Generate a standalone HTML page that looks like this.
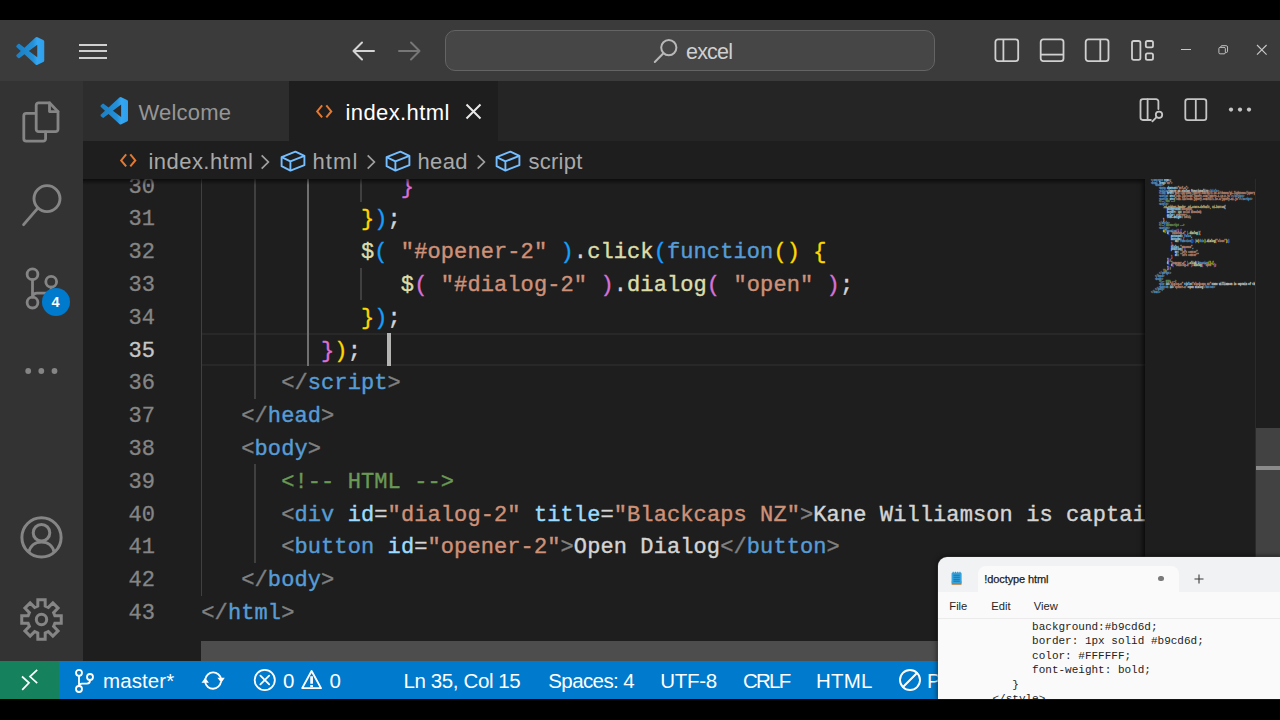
<!DOCTYPE html>
<html lang="en">
<head>
<meta charset="utf-8">
<title>index.html - excel - Visual Studio Code</title>
<style>
html,body{margin:0;padding:0;}
body{width:1280px;height:720px;overflow:hidden;position:relative;background:#000;font-family:"Liberation Sans",sans-serif;color:#ccc;}
.abs{position:absolute;}
#titlebar{left:0;top:20px;width:1280px;height:60.5px;background:#3b3b3b;}
#activity{left:0;top:80.5px;width:83px;height:580.5px;background:#333333;}
#tabs{left:83px;top:80.5px;width:1197px;height:60.5px;background:#252526;}
#crumbs{left:83px;top:141px;width:1197px;height:38px;background:#1e1e1e;}
#editor{left:83px;top:179px;width:1197px;height:482px;background:#1e1e1e;overflow:hidden;}
#status{left:0;top:661px;width:1280px;height:38.4px;background:#007acc;color:#fff;}
#status .ui{font-size:20.5px;}
svg{display:block;overflow:visible;}
.ui{font-size:21.5px;white-space:nowrap;line-height:1;}
/* code */
.ln{position:absolute;left:0;width:71.5px;text-align:right;color:#858585;-webkit-text-stroke:0.3px;font:22px/32.8px "Liberation Mono",monospace;height:32.8px;white-space:pre;}
.cl{position:absolute;left:118px;color:#d4d4d4;letter-spacing:.1px;-webkit-text-stroke:0.4px;font:22px/32.8px "Liberation Mono",monospace;height:32.8px;white-space:pre;}
.g{color:#808080}.t{color:#569cd6}.a{color:#9cdcfe}.s{color:#ce9178}.c{color:#6a9955}.f{color:#dcdcaa}
.n{color:#b5cea8}.d{color:#d7ba7d}
.b1{color:#ffd700}.b2{color:#da70d6}.b3{color:#179fff}
.guide{position:absolute;width:1.7px;background:#404040;}
.guide.act{background:#707070;}
</style>
</head>
<body>

<!-- ===== TITLE BAR ===== -->
<div id="titlebar" class="abs">
  <svg class="abs" style="left:16px;top:16.5px" width="28.5" height="28" viewBox="0 0 24 24"><defs><linearGradient id="vg" x1="0" y1="0" x2="1" y2="0"><stop offset="0" stop-color="#1b7fc4"/><stop offset=".6" stop-color="#2490d8"/><stop offset=".75" stop-color="#35a6f2"/><stop offset="1" stop-color="#2e9fea"/></linearGradient></defs><path fill="url(#vg)" d="M23.15 2.587L18.21.21a1.494 1.494 0 0 0-1.705.29l-9.46 8.63-4.12-3.128a.999.999 0 0 0-1.276.057L.327 7.261A1 1 0 0 0 .326 8.74L3.899 12 .326 15.26a1 1 0 0 0 .001 1.479L1.65 17.94a.999.999 0 0 0 1.276.057l4.12-3.128 9.46 8.63a1.492 1.492 0 0 0 1.704.29l4.942-2.377A1.5 1.5 0 0 0 24 20.06V3.939a1.5 1.5 0 0 0-.85-1.352zm-5.146 14.861L10.826 12l7.178-5.448v10.896z"/></svg>
  <!-- hamburger -->
  <div class="abs" style="left:79px;top:23.5px;width:28px;height:2px;background:#d0d0d0"></div>
  <div class="abs" style="left:79px;top:30.2px;width:28px;height:2px;background:#d0d0d0"></div>
  <div class="abs" style="left:79px;top:37px;width:28px;height:2px;background:#d0d0d0"></div>
  <!-- nav arrows -->
  <svg class="abs" style="left:351px;top:19px" width="26" height="24" viewBox="0 0 26 24" fill="none" stroke="#d4d4d4" stroke-width="2" stroke-linecap="round" stroke-linejoin="round"><path d="M2.5 12H23M11 3.5L2.5 12l8.5 8.5"/></svg>
  <svg class="abs" style="left:396px;top:19px" width="26" height="24" viewBox="0 0 26 24" fill="none" stroke="#777" stroke-width="2" stroke-linecap="round" stroke-linejoin="round"><path d="M3 12H23.5M15 3.5L23.5 12 15 20.5"/></svg>
  <!-- command center -->
  <div class="abs" style="left:445px;top:10px;width:488px;height:38.5px;background:#464646;border:1px solid #646464;border-radius:10px;"></div>
  <svg class="abs" style="left:653px;top:17.5px" width="26" height="26" viewBox="0 0 26 26" fill="none" stroke="#b8b8b8" stroke-width="2" stroke-linecap="round"><circle cx="15.8" cy="9.6" r="7.6"/><path d="M10.4 15.2L1.8 24"/></svg>
  <div class="abs ui" style="left:686px;top:21.700px;color:#d0d0d0;letter-spacing:-0.8px;">excel</div>
  <!-- layout controls -->
  <svg class="abs" style="left:993px;top:17px" width="28" height="27" viewBox="0 0 28 27" fill="none" stroke="#d0d0d0" stroke-width="1.8"><rect x="2.4" y="2.3" width="22.8" height="21.8" rx="2.6"/><path d="M10.4 2.3V24"/></svg>
  <svg class="abs" style="left:1038px;top:17px" width="28" height="27" viewBox="0 0 28 27" fill="none" stroke="#d0d0d0" stroke-width="1.8"><rect x="2.7" y="2.3" width="22.8" height="21.8" rx="2.6"/><path d="M2.7 17.6H25.5"/></svg>
  <svg class="abs" style="left:1083px;top:17px" width="28" height="27" viewBox="0 0 28 27" fill="none" stroke="#d0d0d0" stroke-width="1.8"><rect x="2.7" y="2.3" width="22.8" height="21.8" rx="2.6"/><path d="M17.3 2.3V24"/></svg>
  <svg class="abs" style="left:1129px;top:17px" width="28" height="27" viewBox="0 0 28 27" fill="none" stroke="#d0d0d0" stroke-width="1.8"><rect x="3" y="4" width="8.4" height="18.8" rx="1.8"/><rect x="16.8" y="4" width="7.2" height="6.4" rx="1.6"/><rect x="16.8" y="16.4" width="7.2" height="6.4" rx="1.6"/></svg>
  <!-- window controls -->
  <div class="abs" style="left:1181px;top:28.6px;width:9.5px;height:1.2px;background:#c8c8c8"></div>
  <svg class="abs" style="left:1217.500px;top:25px" width="10.600" height="10.200" viewBox="0 0 12 12" fill="none" stroke="#c8c8c8" stroke-width="1.1"><rect x="0.8" y="2.8" width="7.6" height="7.6" rx="1.4"/><path d="M3 2.6V2.2A1.4 1.4 0 0 1 4.4.8H9.4A1.6 1.6 0 0 1 11 2.4V7.4A1.4 1.4 0 0 1 9.6 8.8H8.6"/></svg>
  <svg class="abs" style="left:1256px;top:24px" width="12" height="12" viewBox="0 0 12 12" fill="none" stroke="#c8c8c8" stroke-width="1.1"><path d="M1 1l9.6 9.6M10.6 1L1 10.6"/></svg>
</div>

<!-- ===== ACTIVITY BAR ===== -->
<div id="activity" class="abs">
  <!-- explorer -->
  <svg class="abs" style="left:20px;top:19px" width="42" height="44" viewBox="0 0 42 44" fill="none" stroke="#858585" stroke-width="2.800" stroke-linejoin="round" stroke-linecap="round"><path d="M29.5 2.8H18.6a2.4 2.4 0 0 0-2.4 2.4v24a2.4 2.4 0 0 0 2.4 2.4h17a2.4 2.4 0 0 0 2.4-2.4V11.6z"/><path d="M29.5 2.8v8.8H38"/><path d="M15.6 13.4H6.2a2.4 2.4 0 0 0-2.4 2.4v23a2.4 2.4 0 0 0 2.4 2.4h17a2.4 2.4 0 0 0 2.4-2.4V32"/></svg>
  <!-- search -->
  <svg class="abs" style="left:20px;top:101px" width="44" height="46" viewBox="0 0 44 46" fill="none" stroke="#858585" stroke-width="2.900" stroke-linecap="round"><circle cx="27" cy="16.6" r="13"/><path d="M17.6 26.4L3.6 42.6"/></svg>
  <!-- scm -->
  <svg class="abs" style="left:22px;top:184px" width="50" height="50" viewBox="0 0 50 50" fill="none" stroke="#858585" stroke-width="2.800" stroke-linecap="round"><circle cx="10.5" cy="9.2" r="5.4"/><circle cx="10.5" cy="37.6" r="5.4"/><circle cx="29.2" cy="16.8" r="5.4"/><path d="M10.5 14.6V32.2M29.2 22.2v1.2a4.8 4.8 0 0 1-4.8 4.8H15.3a4.8 4.8 0 0 0-4.8 4"/></svg>
  <div class="abs" style="left:41.5px;top:207.5px;width:28px;height:28px;border-radius:14px;background:#007acc;color:#fff;font-weight:bold;font-size:14.5px;line-height:28px;text-align:center;">4</div>
  <!-- more -->
  <svg class="abs" style="left:24px;top:286px" width="36" height="8" viewBox="0 0 36 8" fill="#858585"><circle cx="4.2" cy="4" r="2.9"/><circle cx="17.3" cy="4" r="2.9"/><circle cx="30.5" cy="4" r="2.9"/></svg>
  <!-- account -->
  <svg class="abs" style="left:20px;top:435px" width="43" height="43" viewBox="0 0 43 43" fill="none" stroke="#858585" stroke-width="3"><circle cx="21.500" cy="21.400" r="19.600"/><circle cx="21.500" cy="16.800" r="8.300"/><path d="M8.800 36.300c1.400-6.600 6.400-10.400 12.700-10.400s11.300 3.800 12.700 10.400"/></svg>
  <!-- manage -->
  <svg class="abs" style="left:20px;top:517px" width="43" height="43" viewBox="0 0 43 43" fill="none" stroke="#858585" stroke-width="3" stroke-linejoin="miter"><path d="M17.79 8.11 L17.84 1.74 L25.16 1.74 L25.21 8.11 L28.34 9.40 L32.88 4.94 L38.06 10.12 L33.60 14.66 L34.89 17.79 L41.26 17.84 L41.26 25.16 L34.89 25.21 L33.60 28.34 L38.06 32.88 L32.88 38.06 L28.34 33.60 L25.21 34.89 L25.16 41.26 L17.84 41.26 L17.79 34.89 L14.66 33.60 L10.12 38.06 L4.94 32.88 L9.40 28.34 L8.11 25.21 L1.74 25.16 L1.74 17.84 L8.11 17.79 L9.40 14.66 L4.94 10.12 L10.12 4.94 L14.66 9.40Z"/><circle cx="21.500" cy="21.500" r="5.200"/></svg>
</div>

<!-- ===== TABS ===== -->
<div id="tabs" class="abs">
  <div class="abs" style="left:0;top:0;width:206px;height:60.5px;background:#2d2d2d;"></div>
  <svg class="abs" style="left:16.5px;top:16px" width="28.5" height="27.5" viewBox="0 0 24 24"><path fill="url(#vg)" d="M23.15 2.587L18.21.21a1.494 1.494 0 0 0-1.705.29l-9.46 8.63-4.12-3.128a.999.999 0 0 0-1.276.057L.327 7.261A1 1 0 0 0 .326 8.74L3.899 12 .326 15.26a1 1 0 0 0 .001 1.479L1.65 17.94a.999.999 0 0 0 1.276.057l4.12-3.128 9.46 8.63a1.492 1.492 0 0 0 1.704.29l4.942-2.377A1.5 1.5 0 0 0 24 20.06V3.939a1.5 1.5 0 0 0-.85-1.352zm-5.146 14.861L10.826 12l7.178-5.448v10.896z"/></svg>
  <div class="abs ui" style="left:55.5px;top:21.2px;color:#969696;font-size:22px;letter-spacing:.2px;">Welcome</div>
  <div class="abs" style="left:206px;top:0;width:208.5px;height:60.5px;background:#1e1e1e;"></div>
  <svg class="abs" style="left:232px;top:23px" width="19" height="15.400" viewBox="0 0 21 17" fill="none" stroke="#e37933" stroke-width="2.2" stroke-linecap="square" stroke-linejoin="miter"><path d="M7.2 2.4L2.4 8.2l4.8 5.8M13.2 2.4l4.8 5.8-4.8 5.8"/></svg>
  <div class="abs ui" style="left:262.5px;top:21.2px;color:#fff;font-size:22px;letter-spacing:.4px;">index.html</div>
  <svg class="abs" style="left:382px;top:22px" width="17" height="17" viewBox="0 0 17 17" fill="none" stroke="#e8e8e8" stroke-width="2"><path d="M1.5 1.5l14 14M15.5 1.5l-14 14"/></svg>
  <!-- editor actions -->
  <svg class="abs" style="left:1055px;top:16px" width="28" height="27" viewBox="0 0 28 27" fill="none" stroke="#c5c5c5" stroke-width="1.8" stroke-linecap="round"><path d="M20.4 12V4.6a2.4 2.4 0 0 0-2.4-2.4H4.9a2.4 2.4 0 0 0-2.4 2.4v16a2.4 2.4 0 0 0 2.4 2.4h8"/><path d="M9.6 2.2V23"/><circle cx="21" cy="17.800" r="3.200"/><path d="M18.600 20.200l-4.200 4.200"/></svg>
  <svg class="abs" style="left:1100px;top:16px" width="28" height="27" viewBox="0 0 28 27" fill="none" stroke="#c5c5c5" stroke-width="1.8"><rect x="2.3" y="2.2" width="21" height="21" rx="2.4"/><path d="M12.8 2.2V23.2"/></svg>
  <svg class="abs" style="left:1144px;top:25.300px" width="26" height="8" viewBox="0 0 26 8" fill="#c5c5c5"><circle cx="4" cy="3.6" r="2.1"/><circle cx="13" cy="3.6" r="2.1"/><circle cx="22" cy="3.6" r="2.1"/></svg>
</div>

<!-- ===== BREADCRUMBS ===== -->
<div id="crumbs" class="abs">
  <svg class="abs" style="left:35.500px;top:12px" width="19" height="15.400" viewBox="0 0 21 17" fill="none" stroke="#e37933" stroke-width="2.2" stroke-linecap="square"><path d="M7.2 2.4L2.4 8.2l4.8 5.8M13.2 2.4l4.8 5.8-4.8 5.8"/></svg>
  <div class="abs ui" style="left:65.5px;top:9.800px;color:#a9a9a9;font-size:22px;letter-spacing:.45px;">index.html</div>
  <svg class="abs" style="left:177.0px;top:12.500px" width="10" height="16" viewBox="0 0 12 19" fill="none" stroke="#a0a0a0" stroke-width="2.100"><path d="M2 1.6l8 7.9-8 7.9"/></svg>
  <svg class="abs" style="left:197px;top:8px" width="26" height="24" viewBox="0 0 26 24" fill="none" stroke="#75beff" stroke-width="1.9" stroke-linejoin="round"><path d="M1.6 8.2L15.4 2.6l9 4.2v9.4L10.4 21.6 1.6 17.2z"/><path d="M1.6 8.2l8.8 4.2 14-5.6M10.4 12.4v9.2"/></svg>
  <div class="abs ui" style="left:229.5px;top:9.800px;color:#a9a9a9;font-size:22px;letter-spacing:1.1px;">html</div>
  <svg class="abs" style="left:283.0px;top:12.500px" width="10" height="16" viewBox="0 0 12 19" fill="none" stroke="#a0a0a0" stroke-width="2.100"><path d="M2 1.6l8 7.9-8 7.9"/></svg>
  <svg class="abs" style="left:302px;top:8px" width="26" height="24" viewBox="0 0 26 24" fill="none" stroke="#75beff" stroke-width="1.9" stroke-linejoin="round"><path d="M1.6 8.2L15.4 2.6l9 4.2v9.4L10.4 21.6 1.6 17.2z"/><path d="M1.6 8.2l8.8 4.2 14-5.6M10.4 12.4v9.2"/></svg>
  <div class="abs ui" style="left:334.5px;top:9.800px;color:#a9a9a9;font-size:22px;letter-spacing:.35px;">head</div>
  <svg class="abs" style="left:392.5px;top:12.500px" width="10" height="16" viewBox="0 0 12 19" fill="none" stroke="#a0a0a0" stroke-width="2.100"><path d="M2 1.6l8 7.9-8 7.9"/></svg>
  <svg class="abs" style="left:412px;top:8px" width="26" height="24" viewBox="0 0 26 24" fill="none" stroke="#75beff" stroke-width="1.9" stroke-linejoin="round"><path d="M1.6 8.2L15.4 2.6l9 4.2v9.4L10.4 21.6 1.6 17.2z"/><path d="M1.6 8.2l8.8 4.2 14-5.6M10.4 12.4v9.2"/></svg>
  <div class="abs ui" style="left:445.5px;top:9.800px;color:#a9a9a9;font-size:22px;letter-spacing:.25px;">script</div>
</div>

<!-- ===== EDITOR ===== -->
<div id="editor" class="abs">
  <!-- current line highlight -->
  <div class="abs" style="left:118px;top:154.1px;width:944px;height:28.8px;border-top:2px solid #282828;border-bottom:2px solid #282828;"></div>
  <!-- indent guides -->
  <div class="guide" style="left:117.700px;top:0;height:416.5px;"></div>
  <div class="guide" style="left:170.900px;top:0;height:219.7px;"></div>
  <div class="guide" style="left:170.900px;top:285.3px;height:98.4px;"></div>
  <div class="guide act" style="left:224.100px;top:0;height:186.9px;"></div>
  <div class="guide" style="left:277.300px;top:0;height:22.9px;"></div>
  <div class="guide" style="left:277.300px;top:88.5px;height:32.8px;"></div>
  <!-- line numbers -->
  <div class="abs" style="left:0.5px;top:-7.4px;width:71.5px;">
    <div class="ln" style="top:0">30</div>
    <div class="ln" style="top:32.8px">31</div>
    <div class="ln" style="top:65.6px">32</div>
    <div class="ln" style="top:98.4px">33</div>
    <div class="ln" style="top:131.2px">34</div>
    <div class="ln" style="top:164px;color:#c6c6c6">35</div>
    <div class="ln" style="top:196.8px">36</div>
    <div class="ln" style="top:229.6px">37</div>
    <div class="ln" style="top:262.4px">38</div>
    <div class="ln" style="top:295.2px">39</div>
    <div class="ln" style="top:328px">40</div>
    <div class="ln" style="top:360.8px">41</div>
    <div class="ln" style="top:393.6px">42</div>
    <div class="ln" style="top:426.4px">43</div>
  </div>
  <!-- code -->
  <div class="abs" id="code" style="left:0.3px;top:-7.4px;width:1061.7px;height:500px;overflow:hidden;">
    <div class="cl" style="top:0">               <span class="b2">}</span></div>
    <div class="cl" style="top:32.8px">            <span class="b1">}</span><span class="b3">)</span>;</div>
    <div class="cl" style="top:65.6px">            <span class="f">$</span><span class="b3">(</span><span class="s"> "#opener-2" </span><span class="b3">)</span>.<span class="f">click</span><span class="b3">(</span><span class="t">function</span><span class="b1">()</span> <span class="b1">{</span></div>
    <div class="cl" style="top:98.4px">               <span class="f">$</span><span class="b2">(</span><span class="s"> "#dialog-2" </span><span class="b2">)</span>.<span class="f">dialog</span><span class="b2">(</span><span class="s"> "open" </span><span class="b2">)</span>;</div>
    <div class="cl" style="top:131.2px">            <span class="b1">}</span><span class="b3">)</span>;</div>
    <div class="cl" style="top:164px">         <span class="b2">}</span><span class="b1">)</span>; </div>
    <div class="cl" style="top:196.8px">      <span class="g">&lt;/</span><span class="t">script</span><span class="g">&gt;</span></div>
    <div class="cl" style="top:229.6px">   <span class="g">&lt;/</span><span class="t">head</span><span class="g">&gt;</span></div>
    <div class="cl" style="top:262.4px">   <span class="g">&lt;</span><span class="t">body</span><span class="g">&gt;</span></div>
    <div class="cl" style="top:295.2px">      <span class="c">&lt;!-- HTML --&gt;</span></div>
    <div class="cl" style="top:328px">      <span class="g">&lt;</span><span class="t">div</span> <span class="a">id</span>=<span class="s">"dialog-2"</span> <span class="a">title</span>=<span class="s">"Blackcaps NZ"</span><span class="g">&gt;</span>Kane Williamson is captain of the New Zealand team<span class="g">&lt;/</span><span class="t">div</span><span class="g">&gt;</span></div>
    <div class="cl" style="top:360.8px">      <span class="g">&lt;</span><span class="t">button</span> <span class="a">id</span>=<span class="s">"opener-2"</span><span class="g">&gt;</span>Open Dialog<span class="g">&lt;/</span><span class="t">button</span><span class="g">&gt;</span></div>
    <div class="cl" style="top:393.6px">   <span class="g">&lt;/</span><span class="t">body</span><span class="g">&gt;</span></div>
    <div class="cl" style="top:426.4px"><span class="g">&lt;/</span><span class="t">html</span><span class="g">&gt;</span></div>
  </div>
  <!-- cursor -->
  <div class="abs" style="left:304.300px;top:153.800px;width:3.700px;height:32.800px;background:#b4b5b3;"></div>
  <!-- top shadow under breadcrumbs -->
  <div class="abs" style="left:0;top:0;width:1173px;height:6px;background:linear-gradient(#000 0,rgba(0,0,0,0) 100%);opacity:.6;"></div>
  <!-- minimap -->
  <div class="abs" id="minimap" style="left:1062px;top:0;width:111px;height:482px;background:#1e1e1e;box-shadow:-4px 0 5px -2px rgba(0,0,0,.75);overflow:hidden;">
    <div class="abs" style="left:5.800px;top:-0.300px;width:900px;transform-origin:0 0;transform:scale(0.1389,0.16667);font:bold 16px/16px 'Liberation Mono',monospace;-webkit-text-stroke:2px;color:#d4d4d4;white-space:pre;opacity:.82;"><span class="g">&lt;!</span><span class="t">doctype</span> <span class="a">html</span><span class="g">&gt;</span>
<span class="g">&lt;</span><span class="t">html</span> <span class="a">lang</span>=<span class="s">"en"</span><span class="g">&gt;</span>
   <span class="g">&lt;</span><span class="t">head</span><span class="g">&gt;</span>
      <span class="g">&lt;</span><span class="t">meta</span> <span class="a">charset</span>=<span class="s">"utf-8"</span><span class="g">&gt;</span>
      <span class="g">&lt;</span><span class="t">title</span><span class="g">&gt;</span>jQuery UI Dialog functionality<span class="g">&lt;/</span><span class="t">title</span><span class="g">&gt;</span>
      <span class="g">&lt;</span><span class="t">link</span> <span class="a">href</span>=<span class="s">"cdn.lib/code.jquery.com/ui/1.10.4/themes/ui-lightness/jquery-ui.css"</span> <span class="a">rel</span>=<span class="s">"stylesheet"</span><span class="g">&gt;</span>
      <span class="g">&lt;</span><span class="t">script</span> <span class="a">src</span>=<span class="s">"cdn.lib/code.jquery.com/jquery-1.10.2.js"</span><span class="g">&gt;&lt;/</span><span class="t">script</span><span class="g">&gt;</span>
      <span class="g">&lt;</span><span class="t">script</span> <span class="a">src</span>=<span class="s">"cdn.lib/code.jquery.com/ui/1.10.4/jquery-ui.js"</span><span class="g">&gt;&lt;/</span><span class="t">script</span><span class="g">&gt;</span>
      <span class="c">&lt;!-- CSS --&gt;</span>
      <span class="g">&lt;</span><span class="t">style</span><span class="g">&gt;</span>
         <span class="d">.ui-widget-header,.ui-state-default, ui-button</span>{
            <span class="a">background</span>:<span class="s">#b9cd6d</span>;
            <span class="a">border</span>: <span class="n">1px</span> <span class="s">solid</span> <span class="s">#b9cd6d</span>;
            <span class="a">color</span>: <span class="s">#FFFFFF</span>;
            <span class="a">font-weight</span>: <span class="s">bold</span>;
         }
      <span class="g">&lt;/</span><span class="t">style</span><span class="g">&gt;</span>
      <span class="c">&lt;!-- Javascript --&gt;</span>
      <span class="g">&lt;</span><span class="t">script</span><span class="g">&gt;</span>
         <span class="f">$</span><span class="b1">(</span><span class="t">function</span><span class="b2">()</span> <span class="b2">{</span>
            <span class="f">$</span><span class="b3">(</span><span class="s"> "#dialog-2" </span><span class="b3">)</span>.<span class="f">dialog</span><span class="b3">(</span><span class="b1">{</span>
               <span class="a">autoOpen</span>: <span class="t">false</span>, 
               <span class="a">buttons</span>: <span class="b2">{</span>
                  <span class="f">OK</span>: <span class="t">function</span><span class="b3">()</span> <span class="b3">{</span><span class="f">$</span><span class="b1">(</span><span class="t">this</span><span class="b1">)</span>.<span class="f">dialog</span><span class="b1">(</span><span class="s">"close"</span><span class="b1">)</span>;<span class="b3">}</span>
               <span class="b2">}</span>,
               <span class="a">title</span>: <span class="s">"Success"</span>,
               <span class="a">position</span>: <span class="b2">{</span>
                  <span class="a">my</span>: <span class="s">"left center"</span>,
                  <span class="a">at</span>: <span class="s">"left center"</span>
               <span class="b2">}</span>
            <span class="b1">}</span><span class="b3">)</span>;
            <span class="f">$</span><span class="b3">(</span><span class="s"> "#opener-2" </span><span class="b3">)</span>.<span class="f">click</span><span class="b3">(</span><span class="t">function</span><span class="b1">()</span> <span class="b1">{</span>
               <span class="f">$</span><span class="b2">(</span><span class="s"> "#dialog-2" </span><span class="b2">)</span>.<span class="f">dialog</span><span class="b2">(</span><span class="s"> "open" </span><span class="b2">)</span>;
            <span class="b1">}</span><span class="b3">)</span>;
         <span class="b2">}</span><span class="b1">)</span>; 
      <span class="g">&lt;/</span><span class="t">script</span><span class="g">&gt;</span>
   <span class="g">&lt;/</span><span class="t">head</span><span class="g">&gt;</span>
   <span class="g">&lt;</span><span class="t">body</span><span class="g">&gt;</span>
      <span class="c">&lt;!-- HTML --&gt;</span>
      <span class="g">&lt;</span><span class="t">div</span> <span class="a">id</span>=<span class="s">"dialog-2"</span> <span class="a">title</span>=<span class="s">"Blackcaps NZ"</span><span class="g">&gt;</span>Kane Williamson is captain of the New Zealand team<span class="g">&lt;/</span><span class="t">div</span><span class="g">&gt;</span>
      <span class="g">&lt;</span><span class="t">button</span> <span class="a">id</span>=<span class="s">"opener-2"</span><span class="g">&gt;</span>Open Dialog<span class="g">&lt;/</span><span class="t">button</span><span class="g">&gt;</span>
   <span class="g">&lt;/</span><span class="t">body</span><span class="g">&gt;</span>
<span class="g">&lt;/</span><span class="t">html</span><span class="g">&gt;</span></div>
  </div>
  <!-- vertical scrollbar -->
  <div class="abs" style="left:1172px;top:0;width:1px;height:481px;background:#2b2b2b;"></div>
  <div class="abs" style="left:1173px;top:248.5px;width:24px;height:232.5px;background:#424242;"></div>
  <div class="abs" style="left:1173px;top:287.2px;width:24px;height:3.400px;background:#8b8b8b;"></div>
  <!-- horizontal scrollbar -->
  <div class="abs" style="left:118px;top:462px;width:760px;height:20px;background:#4d4d4d;"></div>
</div>

<!-- ===== STATUS BAR ===== -->
<div id="status" class="abs">
  <div class="abs" style="left:0;top:0;width:58.5px;height:38.4px;background:#16825d;"></div>
  <svg class="abs" style="left:20px;top:8px" width="19" height="22" viewBox="0 0 19 22" fill="none" stroke="#fff" stroke-width="1.7" stroke-linecap="butt"><path d="M2 7.500L9 13.800 2.200 20.800M17.200 .8L10 7.600l7.200 6.600"/></svg>
  <svg class="abs" style="left:73px;top:7px" width="23" height="26" viewBox="0 0 23 26" fill="none" stroke="#fff" stroke-width="1.8" stroke-linecap="round"><circle cx="6" cy="4.800" r="3"/><circle cx="6" cy="21" r="3"/><circle cx="17" cy="9" r="3"/><path d="M6 7.800V18M17 12v.6a3 3 0 0 1-3 3H9a3 3 0 0 0-3 2.400"/></svg>
  <div class="abs ui" style="left:103px;top:10.400px;letter-spacing:0.1px;">master*</div>
  <svg class="abs" style="left:200px;top:6.500px" width="26" height="26" viewBox="0 0 26 26" fill="none" stroke="#fff" stroke-width="1.8"><path d="M5.300 11.400A8 8 0 0 1 21.100 11M20.900 13.800A8 8 0 0 1 5.100 14.200"/><path d="M17.400 9.800h7.400l-3.500 4.900zM1.500 14.700h7.400L5.200 9.800z" fill="#fff" stroke="none"/></svg>
  <svg class="abs" style="left:253px;top:7px" width="24" height="24" viewBox="0 0 24 24" fill="none" stroke="#fff" stroke-width="1.8" stroke-linecap="round"><circle cx="11.750" cy="12" r="10.100"/><path d="M7.400 7.600l8.800 8.800M16.200 7.600l-8.800 8.800"/></svg>
  <div class="abs ui" style="left:283px;top:10.400px;">0</div>
  <svg class="abs" style="left:300px;top:7px" width="25" height="24" viewBox="0 0 25 24" fill="none" stroke="#fff" stroke-width="1.9" stroke-linejoin="round" stroke-linecap="butt"><path d="M11.600 3L21 20.100H2.200z"/><path d="M11.600 8.200v7.600M11.600 16.900v2.200" stroke-width="2.700"/></svg>
  <div class="abs ui" style="left:329.500px;top:10.400px;">0</div>
  <div class="abs ui" style="left:403.5px;top:10.400px;letter-spacing:-0.39px;">Ln 35, Col 15</div>
  <div class="abs ui" style="left:548.3px;top:10.400px;letter-spacing:-0.6px;">Spaces: 4</div>
  <div class="abs ui" style="left:660.3px;top:10.400px;letter-spacing:-0.3px;">UTF-8</div>
  <div class="abs ui" style="left:743px;top:10.400px;letter-spacing:-1.75px;">CRLF</div>
  <div class="abs ui" style="left:816px;top:10.400px;letter-spacing:0.2px;">HTML</div>
  <svg class="abs" style="left:897.5px;top:7.200px" width="24" height="24" viewBox="0 0 24 24" fill="none" stroke="#fff" stroke-width="1.900" stroke-linecap="round"><circle cx="12" cy="12" r="10"/><path d="M19 5L5 19"/></svg>
  <div class="abs ui" style="left:927px;top:10.400px;letter-spacing:0px;">Prettier</div>
</div>

<!-- ===== NOTEPAD ===== -->
<div id="notepad" class="abs" style="left:937.5px;top:557.4px;width:343px;height:142px;background:#f1f2f4;border-top-left-radius:9px;overflow:hidden;box-shadow:0 0 0 0.6px rgba(80,80,80,.5),0 0 5px 1px rgba(0,0,0,.55);">
  <!-- active tab -->
  <div class="abs" style="left:40.500px;top:8.500px;width:201px;height:30px;background:#fafafa;border-radius:8px 8px 0 0;"></div>
  <!-- body -->
  <div class="abs" style="left:0;top:34.500px;width:343px;height:110px;background:#fafafa;"></div>
  <div class="abs" style="left:0;top:60.500px;width:343px;height:1px;background:#ebebeb;"></div>
  <!-- app icon -->
  <svg class="abs" style="left:13.800px;top:13.500px" width="11.200" height="14.600" viewBox="0 0 12 15"><rect x="0.600" y="10.500" width="10.800" height="4" rx="1" fill="#b5793c"/><rect x="0.600" y="1.200" width="10.800" height="11.400" rx="1.400" fill="#35a3dd"/><path d="M2.600 4.200h6.800M2.600 6.400h6.800M2.600 8.600h6.800M2.600 10.600h6.800" stroke="#1c6fa3" stroke-width="1"/><path d="M2.400 0.500v1.600M4.800 0.500v1.600M7.200 0.500v1.600M9.600 0.500v1.600" stroke="#2a7fb5" stroke-width="0.900"/></svg>
  <div class="abs" style="left:46.800px;top:15.400px;font-size:11px;line-height:13px;color:#1b1b1b;white-space:nowrap;letter-spacing:-0.1px;-webkit-text-stroke:0.25px;">!doctype html</div>
  <div class="abs" style="left:220.800px;top:18.700px;width:5.400px;height:5.400px;border-radius:3px;background:#7a7a7a;"></div>
  <svg class="abs" style="left:256.500px;top:16.500px" width="10" height="10" viewBox="0 0 10 10" stroke="#3a3a3a" stroke-width="1.100" fill="none"><path d="M5 .5v9M.5 5h9"/></svg>
  <!-- menu -->
  <div class="abs" style="left:11.800px;top:42px;font-size:11.200px;line-height:14px;color:#262626;white-space:nowrap;">File</div>
  <div class="abs" style="left:53.800px;top:42px;font-size:11.200px;line-height:14px;color:#262626;white-space:nowrap;">Edit</div>
  <div class="abs" style="left:96.300px;top:42px;font-size:11.200px;line-height:14px;color:#262626;white-space:nowrap;">View</div>
  <!-- text -->
  <div class="abs" style="left:55px;top:62.500px;font:11px/14.500px 'Liberation Mono',monospace;color:#222;white-space:pre;">      background:#b9cd6d;
      border: 1px solid #b9cd6d;
      color: #FFFFFF;
      font-weight: bold;
   }
&lt;/style&gt;</div>
</div>

</body>
</html>
